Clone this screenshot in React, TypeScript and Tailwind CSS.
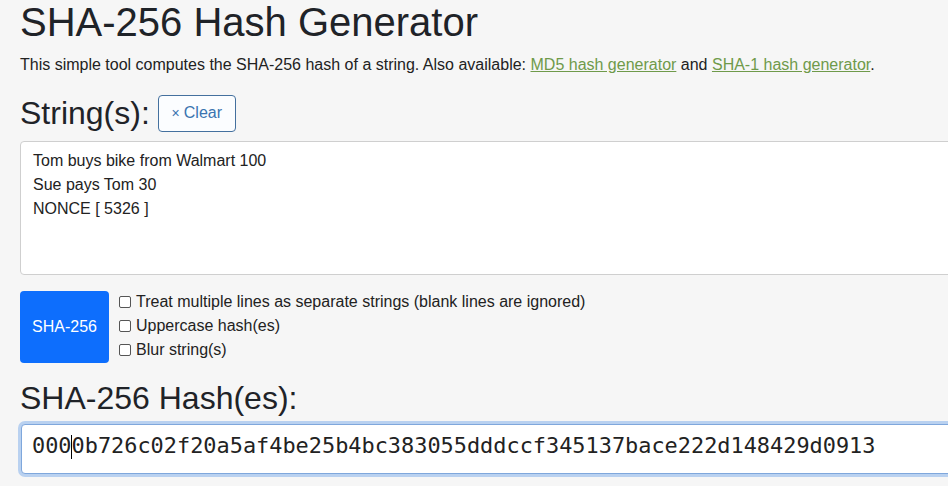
import React from "react";

export default function App() {
  return (
    <div
      className="w-[948px] h-[486px] overflow-hidden bg-[#f6f6f6] text-[#212529] pl-[20px]"
      style={{ fontFamily: '"Liberation Sans", Arial, sans-serif' }}
    >
      <h1 className="text-[40px] leading-[48px] mt-[-2px] text-[#1f2328]">SHA-256 Hash Generator</h1>
      <p className="text-[16px] leading-[24px] mt-[7px] text-[#222]">
        This simple tool computes the SHA-256 hash of a string. Also available:{" "}
        <a className="text-[#6f9a4a] underline">MD5 hash generator</a> and{" "}
        <a className="text-[#6f9a4a] underline">SHA-1 hash generator</a>.
      </p>
      <div className="flex items-center gap-[8px] mt-[17px]">
        <h2 className="text-[32px] leading-[38px] text-[#1f2328]">String(s):</h2>
        <button className="w-[78px] h-[37px] border border-[#44709e] rounded-[4px] text-[#3a74b0] text-[16px] bg-[#fbfdff] flex items-center justify-center">
          <span className="text-[14px] mr-[4px]">×</span>Clear
        </button>
      </div>
      <div className="mt-[9px] w-[1000px] h-[134px] bg-white border border-[#cfcfcf] rounded-[4px] px-[12px] pt-[7px] text-[16px] leading-[24px] text-[#222]">
        <div>Tom buys bike from Walmart 100</div>
        <div>Sue pays Tom 30</div>
        <div>NONCE [ 5326 ]</div>
      </div>
      <div className="flex mt-[16px] gap-[10px]">
        <button className="w-[89px] h-[72px] bg-[#0d6efd] rounded-[4px] text-white text-[16px] flex items-center justify-center">
          SHA-256
        </button>
        <div className="flex flex-col text-[16px] leading-[24px] text-[#222] -mt-[1px]">
          {[
            "Treat multiple lines as separate strings (blank lines are ignored)",
            "Uppercase hash(es)",
            "Blur string(s)",
          ].map((t) => (
            <label key={t} className="flex items-center">
              <span className="inline-block w-[12px] h-[12px] border border-[#555] rounded-[2px] bg-white mr-[5px]" />
              {t}
            </label>
          ))}
        </div>
      </div>
      <h2 className="text-[32px] leading-[38px] mt-[16px] text-[#1f2328]">SHA-256 Hash(es):</h2>
      <div className="mt-[4px] -ml-[2px] w-[1000px] h-[56px] rounded-[7px] bg-[#b9d1f0] p-[3px]">
        <div className="w-full h-full bg-white border border-[#7fa7dc] rounded-[4px] flex items-center pl-[10px] pb-[6px]">
          <span
            className="text-[21.9px] text-[#222]"
            style={{ fontFamily: '"DejaVu Sans Mono", "Liberation Mono", monospace' }}
          >
            000
            <span className="inline-block w-[1px] h-[24px] bg-black align-middle -mx-[0.5px]" />
            0b726c02f20a5af4be25b4bc383055dddccf345137bace222d148429d0913
          </span>
        </div>
      </div>
    </div>
  );
}
